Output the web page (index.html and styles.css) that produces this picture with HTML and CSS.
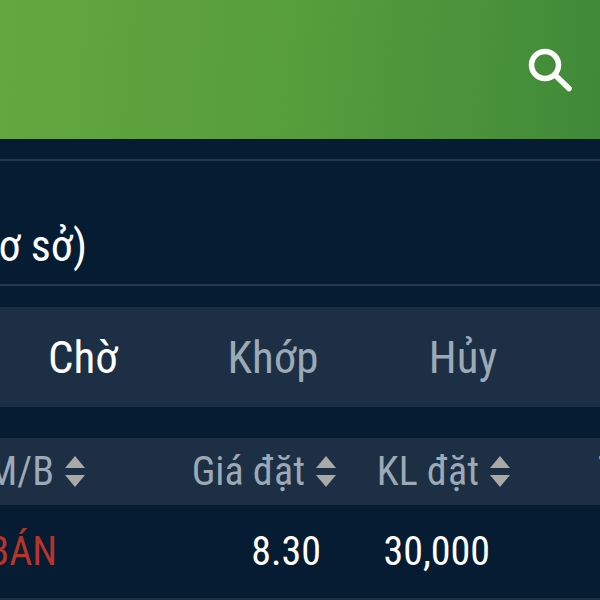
FILE: index.html
```html
<!DOCTYPE html>
<html lang="vi">
<head>
  <meta charset="UTF-8" />
  <title>Lệnh đặt</title>
  <link rel="stylesheet" href="styles.css">
</head>
<body>
  <header class="topbar">
    <svg class="search" viewBox="0 0 44 44" width="44" height="44" fill="none" stroke="#fff" stroke-linecap="round">
      <circle cx="17" cy="17" r="13.5" stroke-width="5.5"/>
      <path d="M27 27 L41 40.5" stroke-width="5.5"/>
    </svg>
  </header>

  <div class="account">
    <span class="account-name">Tài khoản (cơ sở)</span>
  </div>

  <nav class="tabs">
    <span class="tab active">Chờ</span>
    <span class="tab">Khớp</span>
    <span class="tab">Hủy</span>
  </nav>

  <div class="grid-row grid-head">
    <span class="cell">M/B <i class="sort"></i></span>
    <span class="cell">Giá đặt <i class="sort"></i></span>
    <span class="cell">KL đặt <i class="sort"></i></span>
    <span class="cell cell-last">Thời gian</span>
  </div>
  <div class="grid-row grid-body">
    <span class="cell sell">BÁN</span>
    <span class="cell price">8.30</span>
    <span class="cell qty">30,000</span>
  </div>
</body>
</html>
```

FILE: styles.css
```css
html, body {
  margin: 0;
  height: 100%;
  overflow: hidden;
}
body {
  background: #051c32;
  color: #fff;
  font-family: Roboto, "Noto Sans", sans-serif;
  font-stretch: 75%;
}
.topbar {
  height: 140px;
  background: linear-gradient(95deg, #64a73f 0%, #569d3c 50%, #408939 100%);
  display: flex;
  justify-content: flex-end;
  align-items: flex-start;
  padding: 48px 28px 0 0;
  box-sizing: border-box;
  border-bottom: 1px solid #03121f;
}
.account {
  margin-top: 19px;
  height: 127px;
  border-top: 2px solid #26394f;
  border-bottom: 2px solid #26394f;
  display: flex;
  align-items: center;
  padding-top: 46px;
  box-sizing: border-box;
}
.account-name {
  font-size: 44px;
  white-space: nowrap;
  margin-left: -213px;
}
.tabs {
  margin-top: 21px;
  height: 100px;
  background: #1c2f44;
  display: grid;
  grid-template-columns: repeat(3, 190px);
  margin-left: -12px;
  align-items: center;
}
.tab {
  font-size: 45px;
  text-align: center;
  color: #9ca9b6;
}
.tab.active {
  color: #fff;
}
.grid-row {
  display: grid;
  grid-template-columns: 135px 251px 174px 150px;
  margin-left: -50px;
  align-items: center;
  white-space: nowrap;
}
.grid-head {
  margin-top: 31px;
  height: 67px;
  background: #1c2f44;
  color: #9ca9b6;
  font-size: 40px;
}
.grid-body {
  height: 93px;
  border-bottom: 2px solid #1c2f44;
  font-size: 40px;
}
.cell {
  display: flex;
  justify-content: flex-end;
  align-items: center;
  gap: 11px;
}
.cell-last {
  justify-content: flex-start;
  padding-left: 88px;
}
.sell {
  color: #b5342c;
  padding-right: 28px;
}
.price {
  padding-right: 15px;
}
.qty {
  padding-right: 20px;
}
.sort {
  display: inline-flex;
  flex-direction: column;
  gap: 7px;
}
.sort::before,
.sort::after {
  content: "";
  width: 0;
  height: 0;
  border-left: 10.5px solid transparent;
  border-right: 10.5px solid transparent;
}
.sort::before {
  border-bottom: 12px solid #a9a9a6;
}
.sort::after {
  border-top: 12px solid #a9a9a6;
}
```
